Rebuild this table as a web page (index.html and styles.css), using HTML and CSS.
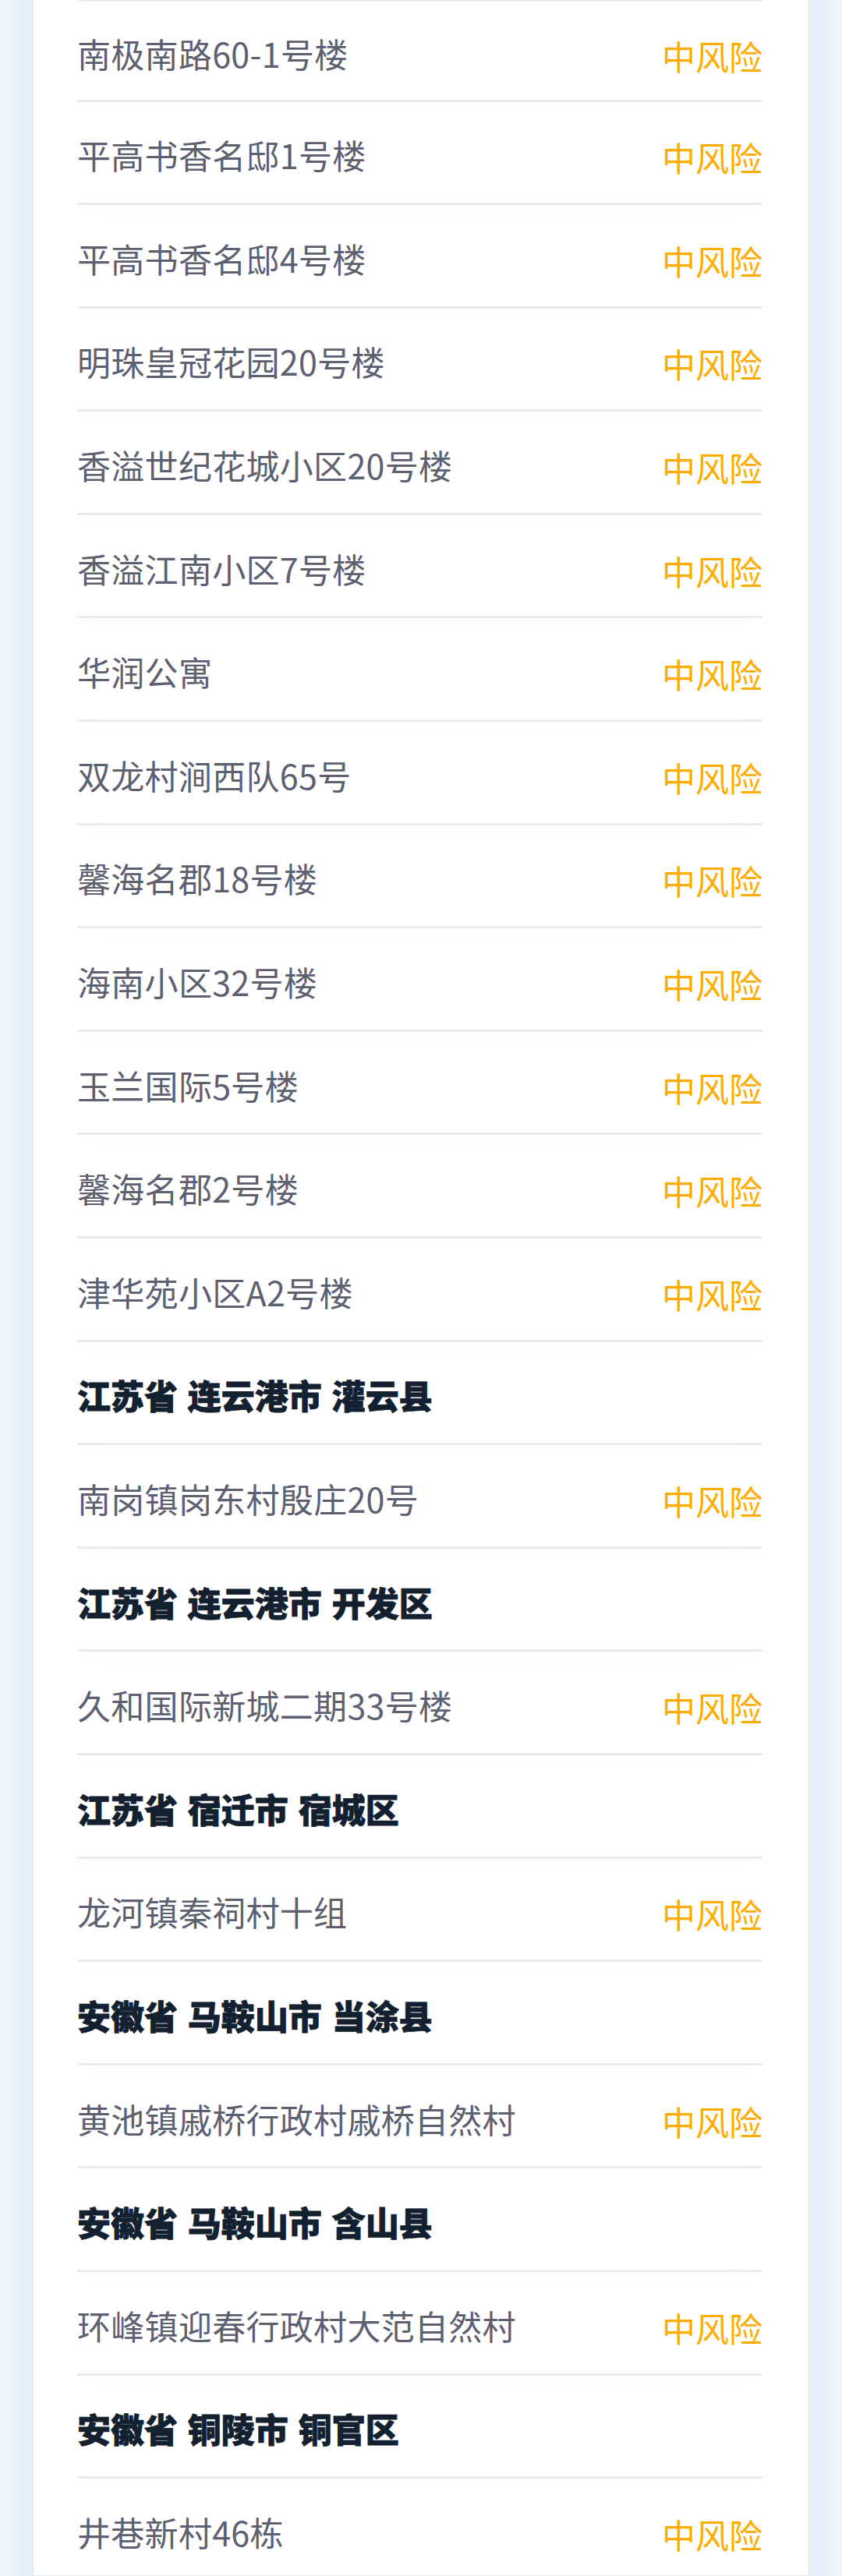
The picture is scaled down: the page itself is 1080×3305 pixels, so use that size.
FILE: index.html
```html
<!DOCTYPE html>
<html lang="zh-CN">
<head>
    <meta charset="UTF-8">
    <meta name="viewport" content="width=device-width, initial-scale=1.0">
    <title>中风险地区</title>
    <link rel="stylesheet" href="styles.css">
</head>
<body>
    <div class="card">
        <ul class="lista">
            <li class="item primeiro"><span class="nome">南极南路60-1号楼</span><span class="nivel">中风险</span></li>
            <li class="item"><span class="nome">平高书香名邸1号楼</span><span class="nivel">中风险</span></li>
            <li class="item"><span class="nome">平高书香名邸4号楼</span><span class="nivel">中风险</span></li>
            <li class="item"><span class="nome">明珠皇冠花园20号楼</span><span class="nivel">中风险</span></li>
            <li class="item"><span class="nome">香溢世纪花城小区20号楼</span><span class="nivel">中风险</span></li>
            <li class="item"><span class="nome">香溢江南小区7号楼</span><span class="nivel">中风险</span></li>
            <li class="item"><span class="nome">华润公寓</span><span class="nivel">中风险</span></li>
            <li class="item"><span class="nome">双龙村涧西队65号</span><span class="nivel">中风险</span></li>
            <li class="item"><span class="nome">馨海名郡18号楼</span><span class="nivel">中风险</span></li>
            <li class="item"><span class="nome">海南小区32号楼</span><span class="nivel">中风险</span></li>
            <li class="item"><span class="nome">玉兰国际5号楼</span><span class="nivel">中风险</span></li>
            <li class="item"><span class="nome">馨海名郡2号楼</span><span class="nivel">中风险</span></li>
            <li class="item"><span class="nome">津华苑小区A2号楼</span><span class="nivel">中风险</span></li>
            <li class="item regiao">江苏省 连云港市 灌云县</li>
            <li class="item"><span class="nome">南岗镇岗东村殷庄20号</span><span class="nivel">中风险</span></li>
            <li class="item regiao">江苏省 连云港市 开发区</li>
            <li class="item"><span class="nome">久和国际新城二期33号楼</span><span class="nivel">中风险</span></li>
            <li class="item regiao">江苏省 宿迁市 宿城区</li>
            <li class="item"><span class="nome">龙河镇秦祠村十组</span><span class="nivel">中风险</span></li>
            <li class="item regiao">安徽省 马鞍山市 当涂县</li>
            <li class="item"><span class="nome">黄池镇戚桥行政村戚桥自然村</span><span class="nivel">中风险</span></li>
            <li class="item regiao">安徽省 马鞍山市 含山县</li>
            <li class="item"><span class="nome">环峰镇迎春行政村大范自然村</span><span class="nivel">中风险</span></li>
            <li class="item regiao">安徽省 铜陵市 铜官区</li>
            <li class="item"><span class="nome">井巷新村46栋</span><span class="nivel">中风险</span></li>
        </ul>
    </div>
</body>
</html>
```

FILE: styles.css
```css
html, body {
    margin: 0;
    padding: 0;
}
body {
    font-family: 'Noto Sans CJK SC', 'Noto Sans', sans-serif;
    background: linear-gradient(to right, #ecf6fd 0, #e2edf8 43px, #e2edf8 1037px, #ecf6fd 1080px);
    height: 3305px;
    overflow: hidden;
}
.card {
    margin: 0 43px;
    background-color: #fff;
    height: 3305px;
}
.lista {
    list-style: none;
    margin: -1.5px 59px 0 56px;
    padding: 0;
    border-top: 3px solid #ebebeb;
}
.item {
    box-sizing: border-box;
    height: 132.6px;
    border-bottom: 3px solid #ebebeb;
    display: flex;
    align-items: center;
    justify-content: space-between;
    padding-top: 6px;
    font-size: 43px;
    box-shadow: 0 10px 24px -14px rgba(0, 0, 0, 0.03);
}
.item.primeiro {
    height: 129px;
}
.nome {
    color: #5d6070;
    letter-spacing: 0.3px;
}
.nivel {
    color: #ffab00;
    margin-top: 6px;
}
.regiao {
    color: #12202f;
    font-weight: 900;
    font-size: 43px;
    word-spacing: 3px;
    -webkit-text-stroke: 0.8px #12202f;
}
```
